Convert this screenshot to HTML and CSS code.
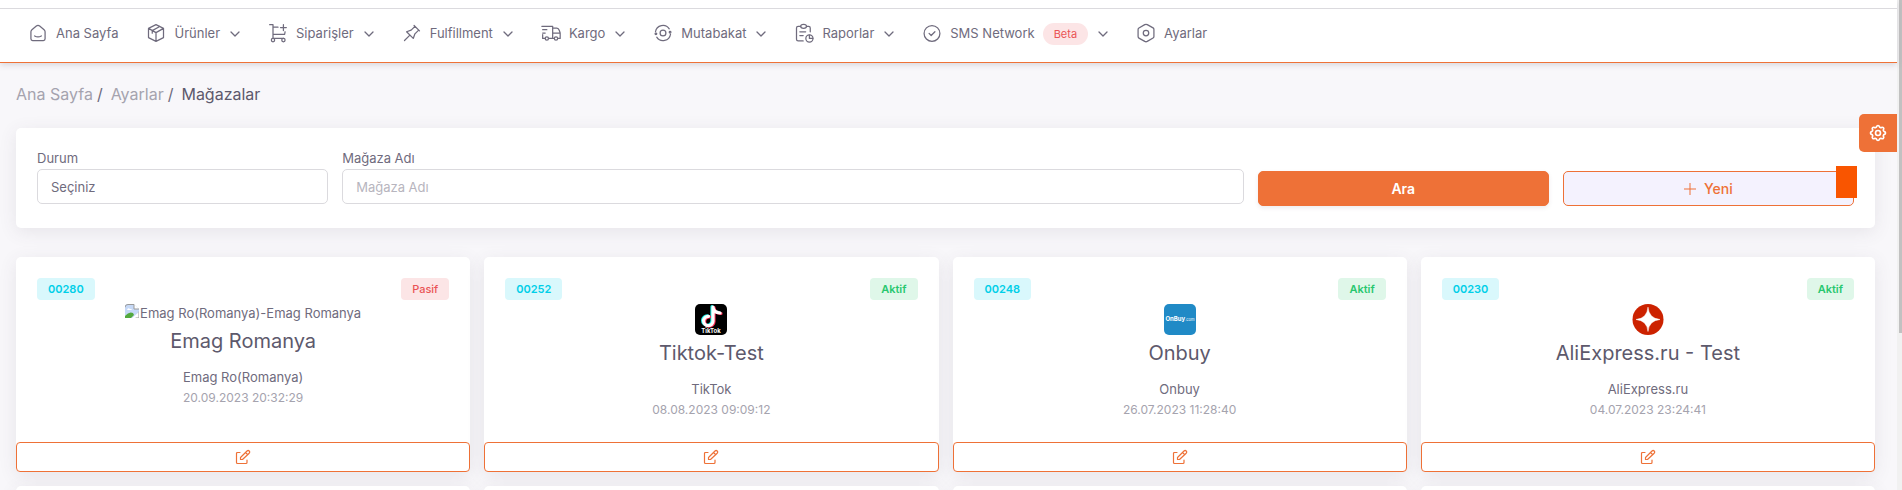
FILE: index.html
```html
<!DOCTYPE html>
<html lang="tr">
<head>
<meta charset="utf-8">
<title>Mağazalar</title>
<link rel="stylesheet" href="styles.css">
</head>
<body>
<svg class="sprite" aria-hidden="true">
  <symbol id="chevron" viewBox="0 0 10 10"><path d="M1 3l4 4 4-4"/></symbol>
  <symbol id="edit" viewBox="0 0 16 16"><path d="M5 3.500H2.500Q1.500 3.500 1.500 4.500v9q0 1 1 1H11q1 0 1-1V11M5.500 10.500V8.500L12 2q1.200-1 2.200 0 1 1 0 2.200L7.500 10.500H5.500zM10.500 3.500l2.200 2.200"/></symbol>
</svg>
<div class="page">
  <div class="main">
    <header class="header">
      <nav class="nav">
        <a class="nav-item" href="#"><svg class="icon" viewBox="0 0 24 24"><path d="M3.500 10.500Q3.500 9 4.700 8L10 3.500q2-1.500 4 0L19.300 8q1.200 1 1.200 2.500V19q0 2-2 2h-13q-2 0-2-2zM8 15.500q4 2.500 8 0"/></svg>Ana Sayfa</a>
        <a class="nav-item" href="#"><svg class="icon" viewBox="0 0 24 24"><path d="M12 2l9 4.500v11L12 22l-9-4.500v-11zM12 11.500V22M12 11.500l9-5M12 11.500l-9-5M16.500 4.200l-9 5v3"/></svg>Ürünler<svg class="chevron"><use href="#chevron"/></svg></a>
        <a class="nav-item" href="#"><svg class="icon" viewBox="0 0 24 24"><circle cx="6" cy="20.500" r="2"/><circle cx="18.500" cy="20.500" r="2"/><path d="M2 2h4v16.500h13M6 5h6M6 13.500h14l.5-3M15 5.500h7M18.500 2v7"/></svg>Siparişler<svg class="chevron"><use href="#chevron"/></svg></a>
        <a class="nav-item" href="#"><svg class="icon" viewBox="0 0 24 24"><path d="M14.500 3l6.500 6.500M15.500 4l-4.500 4.500-5.500 2 8 8 2-5.500L20 8.500M9.500 14.500L3 21"/></svg>Fulfillment<svg class="chevron"><use href="#chevron"/></svg></a>
        <a class="nav-item" href="#"><svg class="icon" viewBox="0 0 24 24"><circle cx="7" cy="18.500" r="2"/><circle cx="18" cy="18.500" r="2"/><path d="M1 4h13v14.500M9 18.500h7M20 18.500h3V12h-9M14 6h5q2 0 3 3l1 3M2 14v4.500h3M2 8h5M2 12h3"/></svg>Kargo<svg class="chevron"><use href="#chevron"/></svg></a>
        <a class="nav-item" href="#"><svg class="icon" viewBox="0 0 24 24"><circle cx="12" cy="12" r="3.500"/><path d="M3 10.500a9 9 0 0 1 16.500-3.500M21 13.500A9 9 0 0 1 4.500 17"/><circle cx="3.500" cy="13" r="1"/><circle cx="20.500" cy="11" r="1"/></svg>Mutabakat<svg class="chevron"><use href="#chevron"/></svg></a>
        <a class="nav-item" href="#"><svg class="icon" viewBox="0 0 24 24"><path d="M8 4H5Q3 4 3 6v13.500q0 2 2 2h6M15 4h2.500q2 0 2 2v4.500M7 10.500h7M7 15h4"/><ellipse cx="11.500" cy="4" rx="3.500" ry="2.500"/><circle cx="18.500" cy="18.500" r="4.300"/><path d="M18.500 14.500v4h4"/></svg>Raporlar<svg class="chevron"><use href="#chevron"/></svg></a>
        <a class="nav-item" href="#"><svg class="icon" viewBox="0 0 24 24"><circle cx="12" cy="12.500" r="9.500"/><path d="M8.500 12.500l2.500 2.500 4.500-4.500"/></svg>SMS Network<span class="beta">Beta</span><svg class="chevron"><use href="#chevron"/></svg></a>
        <a class="nav-item" href="#"><svg class="icon" viewBox="0 0 24 24"><path d="M12 1.500q.8 0 1.500.4l7 4q1 .6 1 1.800v8.600q0 1.200-1 1.800l-7 4q-1.500.8-3 0l-7-4q-1-.6-1-1.800V7.700q0-1.200 1-1.800l7-4q.7-.4 1.500-.4z"/><circle cx="12" cy="12" r="3.300"/></svg>Ayarlar</a>
      </nav>
    </header>

    <main class="content">
      <ol class="breadcrumb">
        <li><a href="#">Ana Sayfa</a></li>
        <li><a href="#">Ayarlar</a></li>
        <li class="current">Mağazalar</li>
      </ol>

      <form class="card filter">
        <div class="field">
          <label for="status">Durum</label>
          <select id="status" class="control"><option>Seçiniz</option></select>
        </div>
        <div class="field wide">
          <label for="store">Mağaza Adı</label>
          <input id="store" class="control" type="text" placeholder="Mağaza Adı">
        </div>
        <button class="btn btn-primary" type="button">Ara</button>
        <button class="btn btn-outline" type="button"><svg class="plus" viewBox="0 0 12 12"><path d="M6 0v12M0 6h12"/></svg>Yeni</button>
        <span class="marker"></span>
      </form>

      <section class="stores">
        <article class="card store">
          <div class="store-body">
            <div class="badges"><span class="badge id">00280</span><span class="badge passive">Pasif</span></div>
            <div class="missing"><svg class="broken" viewBox="0 0 14 14"><path fill="#c6d9f7" d="M0 3q0-3 3-3h6l5 5v3L7 14H0z"/><path fill="#fff" d="M9 0v5h5zM2 6q1-3 3-1 2 0 2 1z"/><path fill="#53a93f" d="M0 14v-2q4-5 8-3l1 2-3 3z"/><path fill="none" stroke="#9a9a9a" d="M0 3q0-2.500 3-2.500h6v4.500h5M14 8v6h-3"/></svg><span>Emag Ro(Romanya)-Emag Romanya</span></div>
            <h2>Emag Romanya</h2>
            <p>Emag Ro(Romanya)</p>
            <time>20.09.2023 20:32:29</time>
          </div>
          <button class="edit" type="button" aria-label="Düzenle"><svg><use href="#edit"/></svg></button>
        </article>
        <article class="card store">
          <div class="store-body">
            <div class="badges"><span class="badge id">00252</span><span class="badge active">Aktif</span></div>
            <svg class="logo" viewBox="0 0 32 31"><rect width="32" height="31" rx="5"/><g fill="none" stroke-width="3.200"><path stroke="#25f4ee" d="M17 2.500v14a4.700 4.700 0 1 1-4.500-4.700M17 3q1 5 7 5.500"/><path stroke="#fe2c55" d="M19 3.500v14a4.700 4.700 0 1 1-4.500-4.700M19 4q1 5 7 5.500"/><path stroke="#fff" d="M18 3v14a4.700 4.700 0 1 1-4.500-4.700M18 3.500q1 5 7 5.500"/></g><text class="logo-text" x="16" y="28.500" font-size="6">TikTok</text></svg>
            <h2>Tiktok-Test</h2>
            <p>TikTok</p>
            <time>08.08.2023 09:09:12</time>
          </div>
          <button class="edit" type="button" aria-label="Düzenle"><svg><use href="#edit"/></svg></button>
        </article>
        <article class="card store">
          <div class="store-body">
            <div class="badges"><span class="badge id">00248</span><span class="badge active">Aktif</span></div>
            <svg class="logo" viewBox="0 0 32 31"><rect width="32" height="31" rx="5" fill="#208ac6"/><text class="logo-text" x="16" y="17" font-size="6">OnBuy<tspan class="dotcom" font-size="4">.com</tspan></text></svg>
            <h2>Onbuy</h2>
            <p>Onbuy</p>
            <time>26.07.2023 11:28:40</time>
          </div>
          <button class="edit" type="button" aria-label="Düzenle"><svg><use href="#edit"/></svg></button>
        </article>
        <article class="card store">
          <div class="store-body">
            <div class="badges"><span class="badge id">00230</span><span class="badge active">Aktif</span></div>
            <svg class="logo" viewBox="0 0 32 31"><circle cx="16" cy="15.500" r="15.500" fill="#cc2200"/><path fill="#fff" d="M16 3.500q1 11 12 12-11 1-12 12-1-11-12-12 11-1 12-12z" stroke="#fff" stroke-width=".5"/><circle cx="16" cy="15.500" r="4.500" fill="#fff"/></svg>
            <h2>AliExpress.ru - Test</h2>
            <p>AliExpress.ru</p>
            <time>04.07.2023 23:24:41</time>
          </div>
          <button class="edit" type="button" aria-label="Düzenle"><svg><use href="#edit"/></svg></button>
        </article>
        <article class="card store"></article>
        <article class="card store"></article>
        <article class="card store"></article>
        <article class="card store"></article>
      </section>
    </main>
    <button class="settings" type="button" aria-label="Tema ayarları"><svg viewBox="0 0 24 24"><path d="M10.325 4.317c.426-1.756 2.924-1.756 3.350 0a1.724 1.724 0 0 0 2.573 1.066c1.543-.94 3.310.826 2.370 2.370a1.724 1.724 0 0 0 1.065 2.572c1.756.426 1.756 2.924 0 3.350a1.724 1.724 0 0 0-1.066 2.573c.94 1.543-.826 3.310-2.370 2.370a1.724 1.724 0 0 0-2.572 1.065c-.426 1.756-2.924 1.756-3.350 0a1.724 1.724 0 0 0-2.573-1.066c-1.543.94-3.310-.826-2.370-2.370a1.724 1.724 0 0 0-1.065-2.572c-1.756-.426-1.756-2.924 0-3.350a1.724 1.724 0 0 0 1.066-2.573c-.94-1.543.826-3.310 2.370-2.370 1 .608 2.296.070 2.572-1.065z"/><circle cx="12" cy="12" r="3"/></svg></button>
  </div>
  <div class="scroll"><div class="thumb"></div></div>
</div>
</body>
</html>
```
FILE: styles.css
```css
* { box-sizing: border-box; }
body {
  margin: 0;
  background: #f8f7fa;
  color: #6f6b7d;
  font: 13px/22px Inter, "Liberation Sans", sans-serif;
}
a { color: inherit; text-decoration: none; }
button, input, select { font: inherit; color: inherit; }
svg { fill: none; stroke: currentColor; stroke-linecap: round; stroke-linejoin: round; }
.sprite { position: absolute; width: 0; height: 0; }

.page { display: flex; height: 100vh; overflow: hidden; }
.main { position: relative; flex: 1; min-width: 0; }
.scroll { width: 5px; padding-left: 2px; background: #f1f1f1; }
.thumb { height: 68%; background: #c1c1c1; }

.header {
  padding-top: 8px;
  background: linear-gradient(#dbdade, #dbdade) 0 8px / 100% 1px no-repeat #fff;
  border-bottom: 1px solid #ee7137;
  box-shadow: 0 2px 6px rgba(75, 70, 92, .18);
}
.nav { display: flex; align-items: center; gap: 28px; height: 54px; padding: 0 28px 4px; }
.nav-item { display: flex; align-items: center; white-space: nowrap; }
.icon { width: 20px; height: 20px; margin-right: 8px; stroke-width: 1.500; }
.chevron { width: 10px; height: 10px; margin: 2px 0 0 10px; stroke-width: 1.300; }
.beta {
  margin: 2px 0 0 8px;
  padding: 0 11px;
  border-radius: 11px;
  background: #fce5e6;
  color: #ea5455;
  font-size: 11px;
  line-height: 22px;
}

.content { padding: 20px 22px 0 16px; }
.breadcrumb { display: flex; margin: 0 0 23px; padding: 0; list-style: none; font-size: 16px; line-height: 22px; }
.breadcrumb a { color: #a5a3ae; }
.breadcrumb li + li::before { content: "/"; margin: 0 8px 0 4px; color: #6f6b7d; }
.current { color: #5d596c; }

.card { border-radius: 5px; background: #fff; box-shadow: 0 4px 18px rgba(75, 70, 92, .1); }
.filter {
  position: relative;
  display: grid;
  grid-template-columns: repeat(12, 1fr);
  gap: 14px;
  align-items: end;
  padding: 20px 21px 24px;
}
.filter > * { grid-column: span 2; }
.filter > .wide { grid-column: span 6; }
.field { display: flex; flex-direction: column; }
.field label { line-height: 21px; }
.control {
  width: 100%;
  height: 35px;
  padding: 0 13px;
  border: 1px solid #dbdade;
  border-radius: 5px;
  background: #fff;
  appearance: none;
}
.control::placeholder { color: #b7b5be; opacity: 1; }
.btn {
  display: flex;
  align-items: center;
  justify-content: center;
  gap: 8px;
  height: 35px;
  margin-bottom: -2px;
  border: 1px solid #ee7137;
  border-radius: 5px;
  font-size: 14px;
  font-weight: 500;
}
.btn-primary { background: #ee7137; color: #fff; font-weight: 600; box-shadow: 0 2px 4px rgba(75, 70, 92, .1); }
.btn-outline { background: #f4f2fe; color: #ee7137; }
.plus { width: 12px; height: 12px; }
.marker { position: absolute; top: 38px; right: 18px; width: 21px; height: 32px; background: #f95500; }

.stores { display: grid; grid-template-columns: repeat(4, 1fr); gap: 14px; margin-top: 29px; }
.store { min-height: 215px; display: flex; flex-direction: column; }
.store-body { flex: 1; display: flex; flex-direction: column; align-items: center; padding: 21px 21px 0; }
.badges { display: flex; justify-content: space-between; align-self: stretch; margin-bottom: 4px; }
.badge { padding: 0 11px; border-radius: 4px; font-size: 11px; font-weight: 600; line-height: 22px; }
.id { background: #d9f8fc; color: #00cfe8; }
.passive { background: #fce5e6; color: #ea5455; font-weight: 500; }
.active { background: #dff7e9; color: #28c76f; }
.logo { width: 32px; height: 31px; margin-bottom: 6px; fill: #000; stroke: none; }
.logo-text { fill: #fff; font-weight: 700; text-anchor: middle; }
.dotcom { font-weight: 400; }
.missing { display: flex; height: 19px; margin-bottom: 6px; line-height: 19px; }
.broken { width: 14px; height: 14px; margin-right: 1px; stroke: none; }
.store h2 { margin: 0 0 13px; color: #5d596c; font-size: 20px; font-weight: 400; line-height: 24px; }
.store p { margin: 0; line-height: 22px; }
.store time { color: #a5a3ae; font-size: 12px; line-height: 20px; }
.edit {
  display: flex;
  align-items: center;
  justify-content: center;
  height: 30px;
  padding: 0;
  border: 1px solid #ee7137;
  border-radius: 4px;
  background: #fff;
  color: #ee7137;
}
.edit svg { width: 16px; height: 16px; stroke-width: 1.200; }

.settings {
  position: absolute;
  top: 114px;
  right: 0;
  display: flex;
  align-items: center;
  justify-content: center;
  width: 38px;
  height: 38px;
  padding: 0;
  border: 0;
  border-radius: 5px 0 0 5px;
  background: #ee7137;
  color: #fff;
}
.settings svg { width: 20px; height: 20px; stroke-width: 2; }
```
